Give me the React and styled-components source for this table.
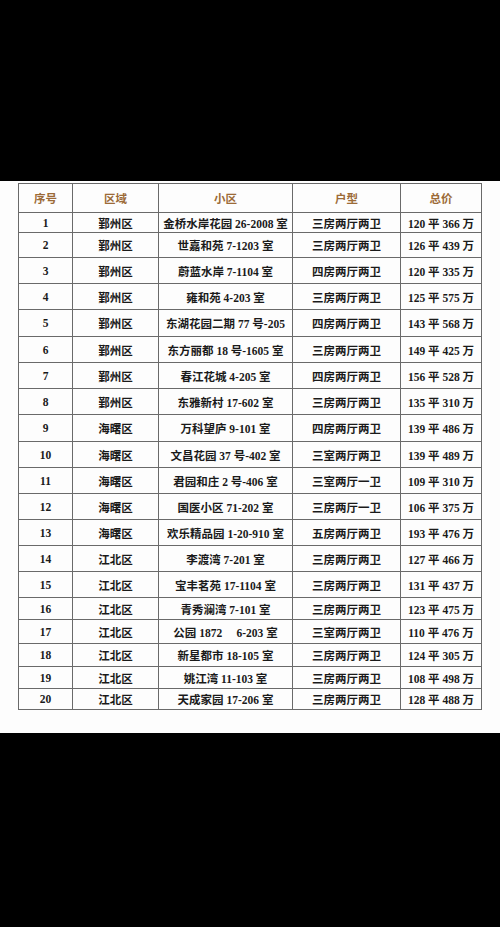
import React from "react";
import styled, { createGlobalStyle } from "styled-components";

const GlobalStyle = createGlobalStyle`
  html, body {
    margin: 0;
    padding: 0;
    background: #000;
  }
`;

const Page = styled.div`
  width: 500px;
  height: 927px;
  background: #000;
  display: flex;
  flex-direction: column;
`;

const Sheet = styled.div`
  margin-top: 181px;
  height: 552px;
  background: #fdfdfd;
  padding: 2px 0 0 18px;
  box-sizing: border-box;
`;

const Table = styled.table`
  width: 463px;
  border-collapse: collapse;
  table-layout: fixed;
  font-family: "Liberation Serif", "Noto Sans CJK SC", serif;
  font-weight: bold;
  font-size: 11.5px;
  color: #1a1a1a;

  td, th {
    border: 1px solid #6a6a6a;
    padding: 0;
    text-align: center;
    white-space: pre;
    overflow: hidden;
  }
`;

const HeadCell = styled.th`
  height: 28px;
  color: #9c6b38;
  font-family: "Noto Sans CJK SC", sans-serif;
  font-size: 11.5px;
`;

const Row = styled.tr`
  height: ${(p) => p.$h}px;
`;

const cols = [54, 86, 134, 108, 81];
const heads = ["序号", "区域", "小区", "户型", "总价"];

const rows = [
  ["1", "鄞州区", "金桥水岸花园 26-2008 室", "三房两厅两卫", "120 平 366 万", 20],
  ["2", "鄞州区", "世嘉和苑 7-1203 室", "三房两厅两卫", "126 平 439 万", 25],
  ["3", "鄞州区", "蔚蓝水岸 7-1104 室", "四房两厅两卫", "120 平 335 万", 26],
  ["4", "鄞州区", "雍和苑 4-203 室", "三房两厅两卫", "125 平 575 万", 26],
  ["5", "鄞州区", "东湖花园二期 77 号-205", "四房两厅两卫", "143 平 568 万", 27],
  ["6", "鄞州区", "东方丽都 18 号-1605 室", "三房两厅两卫", "149 平 425 万", 26],
  ["7", "鄞州区", "春江花城 4-205 室", "四房两厅两卫", "156 平 528 万", 26],
  ["8", "鄞州区", "东雅新村 17-602 室", "三房两厅两卫", "135 平 310 万", 26],
  ["9", "海曙区", "万科望庐 9-101 室", "四房两厅两卫", "139 平 486 万", 27],
  ["10", "海曙区", "文昌花园 37 号-402 室", "三室两厅两卫", "139 平 489 万", 26],
  ["11", "海曙区", "君园和庄 2 号-406 室", "三室两厅一卫", "109 平 310 万", 26],
  ["12", "海曙区", "国医小区 71-202 室", "三房两厅一卫", "106 平 375 万", 26],
  ["13", "海曙区", "欢乐精品园 1-20-910 室", "五房两厅两卫", "193 平 476 万", 26],
  ["14", "江北区", "李渡湾 7-201 室", "三房两厅两卫", "127 平 466 万", 26],
  ["15", "江北区", "宝丰茗苑 17-1104 室", "三房两厅两卫", "131 平 437 万", 26],
  ["16", "江北区", "青秀澜湾 7-101 室", "三房两厅两卫", "123 平 475 万", 22],
  ["17", "江北区", "公园 1872     6-203 室", "三室两厅两卫", "110 平 476 万", 24],
  ["18", "江北区", "新星都市 18-105 室", "三房两厅两卫", "124 平 305 万", 23],
  ["19", "江北区", "姚江湾 11-103 室", "三房两厅两卫", "108 平 498 万", 22],
  ["20", "江北区", "天成家园 17-206 室", "三房两厅两卫", "128 平 488 万", 21],
];

export default function App() {
  return (
    <Page>
      <GlobalStyle />
      <Sheet>
        <Table>
          <colgroup>
            {cols.map((w, i) => (
              <col key={i} width={w} />
            ))}
          </colgroup>
          <thead>
            <tr>
              {heads.map((h) => (
                <HeadCell key={h}>{h}</HeadCell>
              ))}
            </tr>
          </thead>
          <tbody>
            {rows.map((r) => (
              <Row key={r[0]} $h={r[5]}>
                {r.slice(0, 5).map((c, i) => (
                  <td key={i}>{c}</td>
                ))}
              </Row>
            ))}
          </tbody>
        </Table>
      </Sheet>
    </Page>
  );
}
